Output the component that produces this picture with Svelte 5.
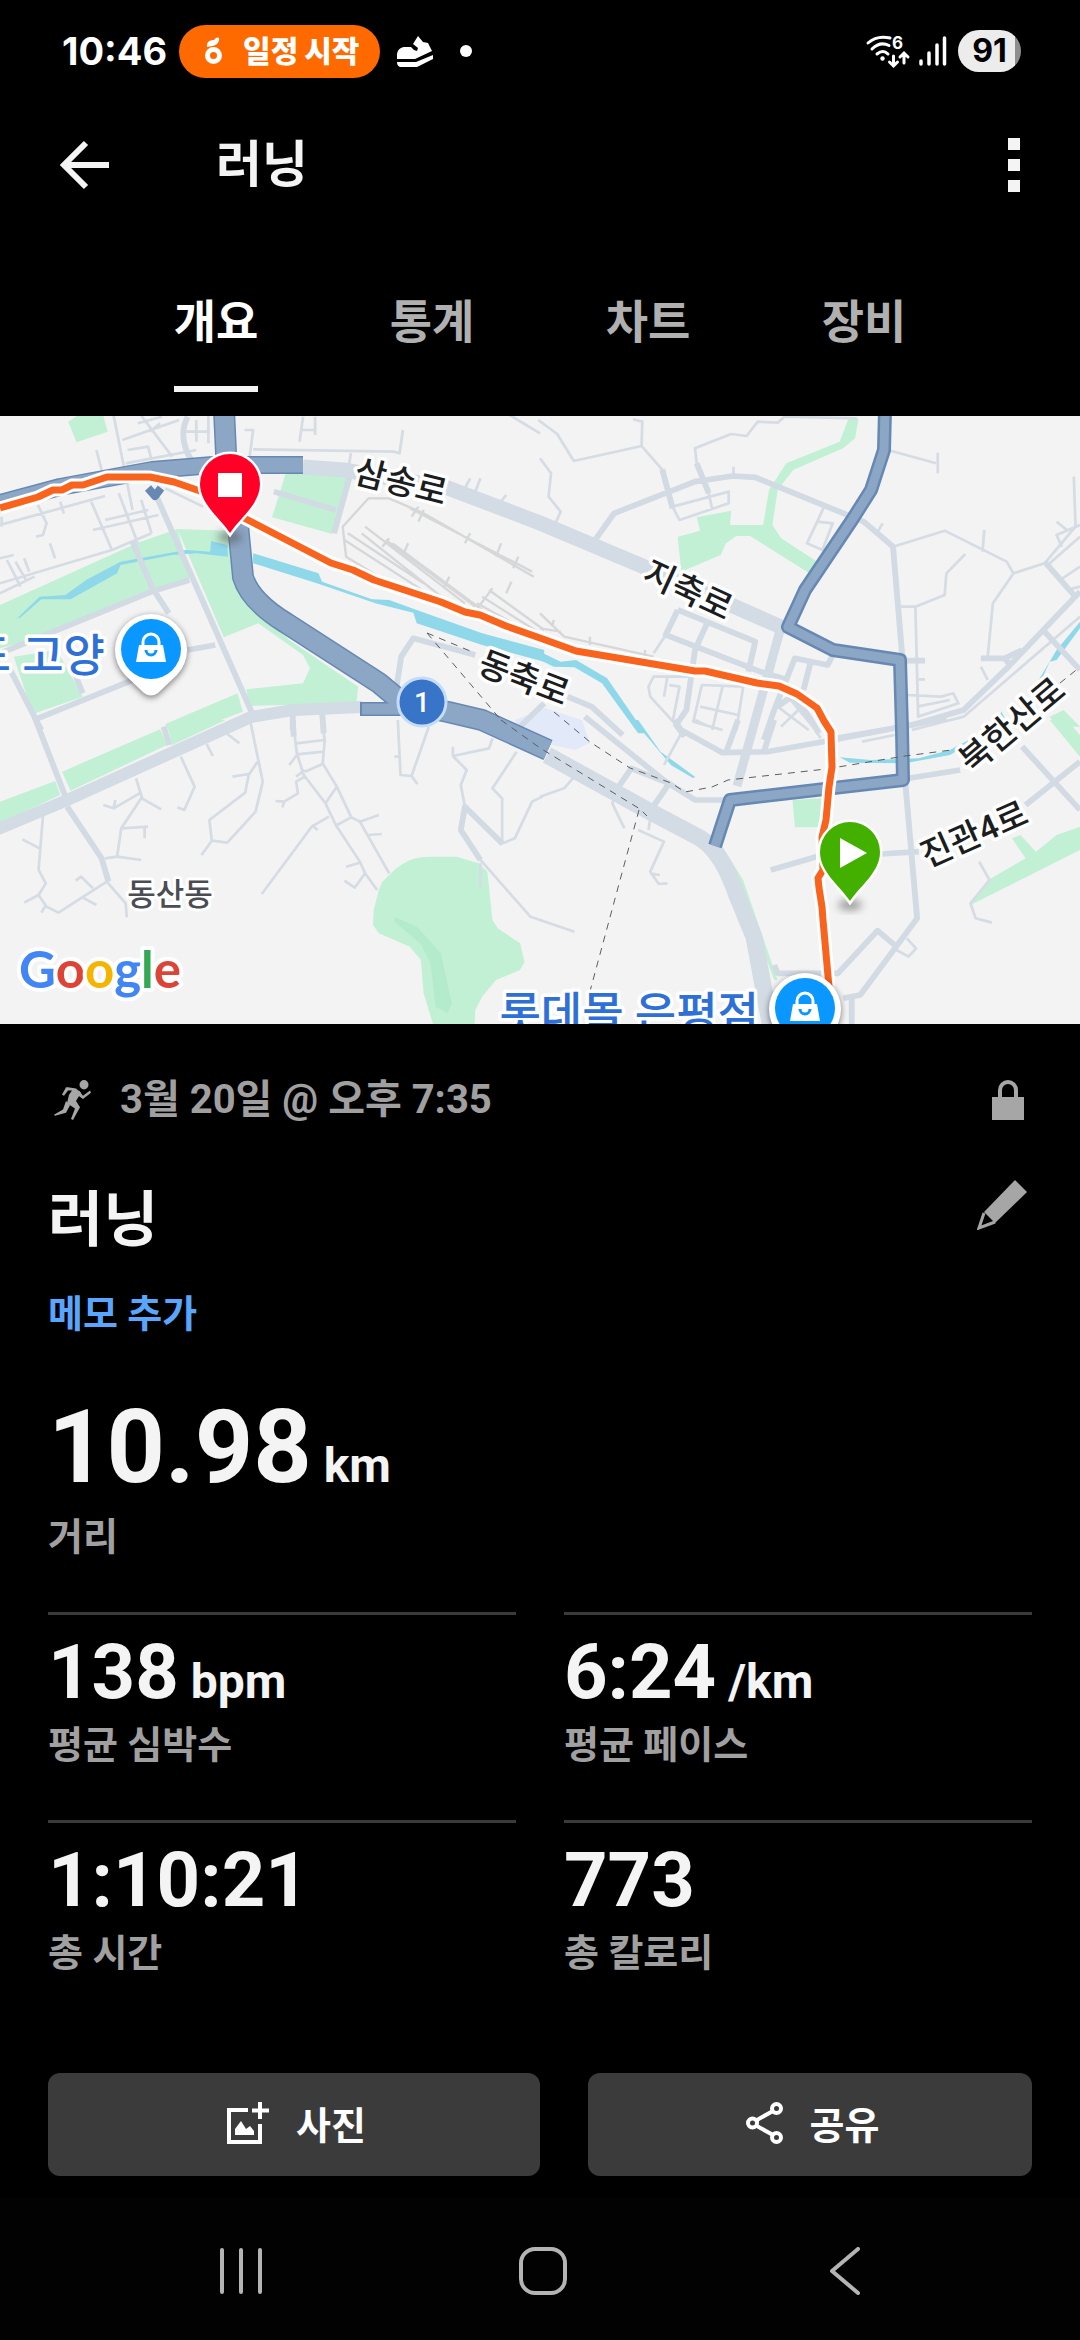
<script>
	let active = '개요';
	const tabs = ['개요', '통계', '차트', '장비'];

	const stats = [
		{ value: '138', unit: 'bpm', label: '평균 심박수' },
		{ value: '6:24', unit: '/km', label: '평균 페이스' },
		{ value: '1:10:21', unit: '', label: '총 시간' },
		{ value: '773', unit: '', label: '총 칼로리' }
	];

	// the map comes in four tiles, each with its own 1568x960 grid
	const tiles = [
		{
			x: 0, y: -6,
			parks: 'M198 35L225 17H300L313 65 222 97z M830 188L1015 200 965 372 790 322z M0 585L400 398 515 357 555 500 440 545 130 680 0 715z M515 357L665 362 690 540 840 690 1040 830 1035 880 725 888 715 838 880 820 900 775 880 735 750 640 650 682z M40 740L165 720 240 860 95 912z M480 942L690 850 705 905 500 985z',
			water: 'M50 625L115 560 190 555 250 510 350 455 540 420 610 425 613 393 660 405 662 440 570 430 500 435 350 465 340 490 270 530 205 568 120 568 60 622z M735 430L925 490 935 515 1080 568 1130 570 1210 600 1400 670 1580 720V755L1400 705 1210 640 1200 608 1090 580 920 520 735 460z',
			rail: 'M1100 500L1005 440 995 350 1070 265H1130L1230 310 1550 500 M1190 295L1545 485 M1010 370L1230 520 M1060 350L1350 580 M1050 370L1330 600 M1120 390L1380 590 M1140 400L1400 600 M1000 390L1300 590 M1420 540L1580 660 M1400 560L1568 670 M1385 580L1568 685 M1430 535L1390 590 M1195 320L1215 290 M1215 335L1230 300 M1350 400L1365 370 M1440 440L1455 400 M1490 475L1505 440 M1110 410L1130 385 M1170 435L1185 400 M1470 550L1485 515 M1290 530L1305 500',
			lanes: 'M330 17L385 300 M355 90L520 30 M410 17L500 140 M400 40L470 20 M435 65L465 40 M365 160L570 120 M570 30V95 M605 17V100 M540 65H610 M370 120L430 110 440 150 M280 120L295 180 M0 345L305 258 M5 350V320 M110 285L135 340 125 375 105 380 M175 275L185 310 M265 275L325 420 M345 250L400 400 M410 270L440 370 M325 420L0 520 M440 370L325 420 M270 360L460 315 M305 330L430 300 M145 400L160 445 M0 445L40 435 M20 450L60 530 M45 455L75 510 M70 445L85 485 M0 550L100 500 M735 118L1145 125 1160 130 1170 60 M710 60H735L725 140 M870 95L880 20 M915 75V20 M875 60H915 M1020 120L1010 190 M480 235L590 290 M1350 235L1365 205 M1380 245L1395 205 M1450 280L1470 255 M1480 15L1568 70',
			streets: 'M545 20Q515 80 555 150 M455 260L730 905 M385 395L440 530 490 610 M440 545L550 510 M0 730L440 545 M30 780L120 960 M110 925L410 800 M545 720L625 705 M205 760L240 850 M850 905V960 M935 905L940 970 M1150 840L1165 740 1200 685 1380 735 M1580 880L1510 950 M970 370L1015 200 M795 245L975 300'
		},
		{
			x: 540, y: -6,
			parks: 'M455 322L555 302 552 345H648L665 240 715 160 870 95 895 28 925 25 915 85 880 115 735 180 690 240 675 345 700 385 805 455 780 488 610 378H570L540 400 525 435 410 485 400 380 465 362z M165 396L320 455 310 465z M570 575L695 635 680 640z M1480 920L1520 900 1568 950H1500z',
			water: 'M0 725L60 755 105 750 195 805 305 970H285L180 820 100 772 40 770 0 750z M1568 635L1500 720 1448 810 1455 812 1480 755 1500 750 1568 655z M1340 905L1350 925H1330z M1380 880L1375 895H1365z',
			rail: 'M0 610L70 680 330 740 M0 655L60 665 M40 630L35 650 M145 680V705 M305 720V740',
			lanes: 'M-5 30L50 72 98 153 295 108 360 185 M295 108L297 35 270 28 M455 160L450 115 555 72 600 78 632 35 690 38 710 20 920 25 M0 145L32 190 25 260 60 305 45 340 M1010 120L1150 160 M1155 128V190 M562 170V198 M385 290L548 245V280L405 330 385 290 M490 250L500 298 M825 290L805 335 850 340 820 420 775 400 805 335 M1025 410L1175 362 1355 455 1375 490 1465 460 1555 350 1550 200 M1285 425L1290 360 M975 375L995 340 M1375 490L1315 580 1300 740 M1045 590H1090L1175 555 1180 490 1235 432 M1090 590L1098 920 1215 880 1200 850 1165 860 1065 855 M1095 890L1190 870 M1100 808H1118 M1280 770L1300 810 M365 675L330 730 M440 800L330 800 315 830 320 860 400 950 M370 800L360 860 M375 825L405 830 385 935 M590 830L470 825 445 935 530 960 M530 830L500 960 M590 830L570 960 M465 890L575 915 M690 890L780 960 M720 860L800 960 M765 885L700 950 M1500 335L1530 360 M1515 410L1500 375 1568 345 M1480 460L1568 380 M1510 510L1568 470 M1568 620L1230 920 1080 960 M1530 540L1568 530',
			streets: 'M160 390L215 310 450 215 560 198 625 202 940 335 1025 410 1052 740 M355 178L385 295 M455 160L490 250 M1568 545L1360 770 1230 900 1080 945 860 985 M400 600L365 675 640 785 720 810 M400 600L625 695 605 785 M485 640L450 720 425 900 395 945 420 980 M850 735L835 765 740 745 680 900 650 990 M785 760L765 840 M690 890L730 860Q760 880 810 970 M1465 455L1550 555 M1465 665L1568 780 M1280 745L1350 745 1400 720 M1345 740L1365 765 M1065 752H1118 M80 860L150 890 240 975'
		},
		{
			x: 0, y: 304,
			parks: 'M0 245L160 183 175 225 0 310z M180 155L465 28 485 75 205 212z M485 15L520 0H655L500 75z M1130 465C1170 420 1210 410 1250 410H1325L1390 430 1415 455 1430 600 1445 625 1510 670 1523 725 1510 750 1440 780 1400 830 1380 870 1378 915H1258L1230 820 1222 720 1190 680 1100 640 1083 615 1085 570 1100 510 1110 485z',
			hills: 'M1145 590L1210 620 1280 700 1312 850 1300 880 1265 860 1250 730 1220 670 1145 605z',
			lanes: 'M125 285L112 450 133 490 112 525 135 560 170 578 310 485 365 550 368 592 M65 358L115 385 M70 548L112 525 M120 578L132 558 M220 482L235 470 270 505 M235 530L280 555 M305 415L340 410 410 420 M340 410L352 325 412 232 395 175 M352 325L430 320 M420 355V320 M300 255L330 265 405 220 M330 265L335 240 M412 235L468 268 M525 110L565 200 535 270 515 262 M600 72L618 108 M660 42L695 70 M728 10L763 185 742 275 660 368 615 362 608 300 712 218 722 165 748 125 M675 170L722 162 M615 362L585 405 M850 0L862 100 882 165 945 250 975 315 1045 425 1060 460 1095 510 M935 0L943 60 937 130 978 200 1020 292 1045 305 1130 460 M860 70L943 60 M862 103L940 95 M885 155L937 132 M945 250L978 200 M978 315L1020 292 M1045 305L1100 285 M1070 345L1108 342 M862 105L840 135 M885 150L860 170 M885 170L860 185 865 220 825 245 800 243 M820 262L825 245 M955 290L905 320 760 522 M905 315L922 330 M1005 440L1045 428 M1060 460L1030 503 1000 482 M1155 0L1163 165 1195 168 1245 20 M1195 168L1212 192 M1145 110H1160 M1315 80V108L1420 85 1430 55 M1315 108L1355 150 1338 195 1350 260 M1500 95L1430 205 1458 235V370 M1460 370L1495 355 1545 245 1575 230 M1395 420L1540 590 1575 602 M1395 430V500',
			streets: 'M100 -10L190 230 M475 20L492 75 M195 260L295 415 315 485 M1460 372L1350 260 1338 330 1395 420 M850 0L853 50'
		},
		{
			x: 540, y: 304,
			parks: 'M733 240L820 235 810 322H740z M545 300L562 255 530 380 590 480 690 780H680L570 480 520 400z M1250 555L1310 475 1410 415 1370 355 1395 345 1440 395 1500 345 1568 320V390z M1480 0H1530L1568 45V110z',
			water: 'M870 112L960 120 1100 115 1190 90 1245 60 1240 75 1190 105 1060 130 900 128z M270 0H285L350 95 450 170 445 175 380 135z',
			lanes: 'M1065 655L1092 685 1070 710 1035 690 M225 210L210 250 245 325 M325 265L315 330 M285 330L360 365 320 455 345 492 370 490 M320 460L348 465 M0 600L100 635 M0 230L70 205 100 170 M410 40L360 135 M1275 425L1305 480 1250 550 1265 595 1312 608 M935 65L1030 45 M780 0L815 55 M450 0L480 15',
			streets: 'M130 -10L365 185 450 240H540 M390 0L410 30 530 98 660 95 850 60 1180 -5 M650 95L680 0 M540 98L575 0 M225 205L265 145 375 190 325 265 M1060 180L1095 595 930 825 880 835 M905 835V925 M670 450L820 405 M990 402L1100 395 M680 735L690 760H865L980 632 1035 680 M1070 175L1220 150 M1400 80L1568 270 M1568 125L1410 255'
		}
	];

	const route =
		'M0 92L38 81 53 74H62L72 69H83L107 61H150L174 66 200 75 246 103 331 147 353 154 374 164 441 186 465 196 480 199 506 210 540 222 576 235 695 255H705L757 267 779 270 797 278 817 292 824 305 831 316 832 351 829 371 826 404 822 421 823 454 818 462 819 472 822 491 823 504 829 571';
	const highway1 =
		'M224 -6L226 37 238 109 243 161Q250 185 286 207L379 267 403 287 448 296 482 304 548 334';
	const highway2 = 'M0 87L60 71 152 54 213 49 303 49';
	const highway3 =
		'M885 -6L884 34 871 74 852 104 805 174 788 211 833 234 900 244 902 314 903 364 730 384 715 430';
</script>

{#snippet pin(x, y)}
	<path
		class="pin-edge"
		d="M{x} {y + 49}C{x - 10} {y + 34} {x - 30} {y + 20} {x - 30} {y}A30 30 0 0 1 {x + 30} {y}C{x + 30} {y + 20} {x + 10} {y + 34} {x} {y + 49}z"
	/>
{/snippet}

{#snippet shop(x, y)}
	<g transform="translate({x} {y})">
		<path class="shop-edge" d="M-26 26A36 36 0 1 1 26 26L7 44Q0 49 -7 44z" />
		<circle r="30" fill="#0a97ff" />
		<path d="M-12 -4H12L15 13H-15z" fill="#fff" />
		<path d="M-8 -3V-7A8 8 0 0 1 8 -7V-3" fill="none" stroke="#fff" stroke-width="3" />
		<path d="M-5 1A5 5 0 0 0 5 1" fill="none" stroke="#0a97ff" stroke-width="3" />
	</g>
{/snippet}

<div class="screen">
	<div class="status">
		<span class="clock">10:46</span>
		<span class="event">
			<svg width="17" height="28" viewBox="0 0 17 28" aria-hidden="true">
				<circle cx="8.5" cy="18.5" r="6" fill="none" stroke="#fff" stroke-width="5" />
				<path d="M2 10C1 4 6 3 9 3 11 0 13 0 14 1 15 5 11 9 7 9z" fill="#fff" />
			</svg>
			일정 시작
		</span>
		<svg class="shoe" width="37" height="31" viewBox="0 0 37 31" aria-hidden="true">
			<path d="M0 23V18C1 13 4 11 8 11H14L17 14 20 15 21 12 16 8 21 0 26 6 31 7 35 15 18 23z" fill="#fff" />
			<path d="M0 26H19L36 19V23L20 31H3Q0 30 0 26z" fill="#fff" />
		</svg>
		<span class="dot"></span>
		<svg class="wifi" width="44" height="32" viewBox="0 0 44 32" aria-hidden="true">
			<g fill="none" stroke="#fff" stroke-width="3" stroke-linecap="round">
				<path d="M2 8Q11 0 24 3" />
				<path d="M6 14Q14 6 23 10.5" />
				<path d="M11 19Q17 14 22 19" />
				<path d="M27.5 21V30M23.5 27L27.5 31 31.5 27M38 28V19M34 22L38 18 42 22" />
			</g>
			<circle cx="16.5" cy="23.5" r="2.2" fill="#fff" />
			<text x="26" y="14" class="wifi-gen">6</text>
		</svg>
		<svg class="signal" width="28" height="30" viewBox="0 0 28 30" aria-hidden="true">
			<path d="M2 25V28M10 17V28M18 9V28M25.5 2V28" stroke="#fff" stroke-width="3.5" stroke-linecap="round" />
		</svg>
		<span class="battery">91</span>
	</div>

	<header>
		<button class="icon" aria-label="뒤로">
			<svg width="50" height="50" viewBox="0 0 50 50">
				<path d="M26 3L4 25 26 47M4 25H49" fill="none" stroke="#f4f4f4" stroke-width="6" />
			</svg>
		</button>
		<h1>러닝</h1>
		<button class="icon more" aria-label="더보기">
			<svg width="12" height="54" viewBox="0 0 12 54">
				<path d="M0 0H12V12H0zM0 21H12V33H0zM0 42H12V54H0z" fill="#f4f4f4" />
			</svg>
		</button>
	</header>

	<nav class="tabs">
		{#each tabs as tab}
			<button class:active={tab === active} on:click={() => (active = tab)}>{tab}</button>
		{/each}
	</nav>

	<svg class="map" viewBox="0 0 1080 608" role="img" aria-label="러닝 경로 지도">
		<defs>
			<filter id="soft" x="-50%" y="-50%" width="200%" height="200%">
				<feGaussianBlur stdDeviation="4" />
			</filter>
		</defs>
		<rect width="1080" height="608" fill="#f3f3f3" />
		<path d="M515 304L545 292 582 304 590 327 575 334 548 328 520 318z" fill="#e2eafa" />
		{#each tiles as t}
			<g transform="translate({t.x} {t.y}) scale(.3444 .3333)">
				<path class="park" d={t.parks} />
				{#if t.hills}<path class="hill" d={t.hills} />{/if}
				{#if t.water}<path class="water" d={t.water} />{/if}
				{#if t.rail}<path class="rail" d={t.rail} />{/if}
				<path class="lane" d={t.lanes} />
				<path class="street" d={t.streets} />
			</g>
		{/each}

		<g class="avenue">
			<path d="M303 51L344 54 448 72 540 107 647 152 781 211" stroke-width="15" />
			<path d="M781 211L737 370" stroke-width="9" />
			<path d="M-4 414L65 385 160 342 251 301 293 294 362 291" stroke-width="12" />
			<path d="M547 339L647 394 700 422Q722 436 736 477L754 521 771 612" stroke-width="17" />
		</g>

		<g class="highway">
			<path d={highway1} stroke-width="22" />
			<path d={highway2} stroke-width="18" />
			<path d="M360 293H410" stroke-width="14" />
			<path d="M148 72L155 80 161 72" stroke-width="8" />
			<path d={highway3} stroke-width="14" />
		</g>
		<g class="highway-top">
			<path d={highway1} stroke-width="19" />
			<path d={highway2} stroke-width="15" />
			<path d="M362 293H410" stroke-width="11" />
			<path d={highway3} stroke-width="9" />
		</g>

		<g class="dashes">
			<path d="M427 217L501 304M427 217L475 237" />
			<path d="M501 304L540 332 640 393 647 400" />
			<path d="M554 296L590 326 630 352 671 367 685 376 712 371 728 364 826 353 905 340 967 332" />
			<path d="M639 394L586 590" />
			<path d="M1060 267L1080 251" />
		</g>

		<path class="route-edge" d={route} />
		<path class="route" d={route} />

		<g class="road-name">
			<text transform="translate(401 66) rotate(14)" y="12">삼송로</text>
			<text transform="translate(688 174) rotate(25)" y="12">지축로</text>
			<text transform="translate(524 262) rotate(21)" y="12">동축로</text>
			<text transform="translate(1012 309) rotate(-40)" y="12">북한산로</text>
			<text transform="translate(974 418) rotate(-24)" y="12">진관4로</text>
		</g>
		<text class="district" x="170" y="489">동산동</text>
		<text class="place" x="105" y="256" text-anchor="end">드 고양</text>
		<text class="place" x="759" y="614" text-anchor="end">롯데몰 은평점</text>

		<circle cx="422" cy="286" r="24" fill="#3874c8" stroke="#c4dcf8" stroke-width="3" />
		<text class="shield" x="422" y="296">1</text>

		{@render shop(151, 233)}
		{@render shop(805, 592)}

		<ellipse cx="230" cy="121" rx="12" ry="6" fill="#555" opacity=".6" filter="url(#soft)" />
		<g fill="#ff0026">{@render pin(230, 68)}</g>
		<rect x="218" y="57" width="24" height="24" fill="#fff" />
		<ellipse cx="850" cy="489" rx="12" ry="5" fill="#555" opacity=".6" filter="url(#soft)" />
		<g fill="#43b000">{@render pin(850, 436)}</g>
		<path d="M840 422L867 437 840 452z" fill="#fff" />

		<text class="google" x="19" y="572"
			><tspan fill="#4285f4">G</tspan><tspan fill="#db4437">o</tspan><tspan fill="#f4b400">o</tspan><tspan
				fill="#4285f4">g</tspan><tspan fill="#34a853">l</tspan><tspan fill="#db4437">e</tspan></text
		>
	</svg>

	<main>
		<div class="date">
			<svg class="runner" width="37" height="40" viewBox="0 0 37 38" preserveAspectRatio="none" aria-hidden="true">
				<circle cx="30" cy="4.5" r="4.5" />
				<path d="M14 7L22 8 27 12 22 20 26 26 19 38 17 37 21 27 13 22 15 14 18 10H14L10 15 8 14 12 7z" />
				<path d="M25 10L29 15 36 10 37 12 29 18 23 14zM12 20L16 24 12 31 1 34 0 33 9 28z" />
			</svg>
			<span>3월 20일 @ 오후 7:35</span>
			<svg class="lock" width="32" height="40" viewBox="0 0 32 40" aria-label="비공개">
				<path d="M0 17H32V40H0z" />
				<path d="M8 18V10A8 8 0 0 1 24 10V18" fill="none" stroke="#a6a6a6" stroke-width="4" />
			</svg>
		</div>

		<div class="title">
			<h2>러닝</h2>
			<button class="icon" aria-label="수정">
				<svg width="50" height="50" viewBox="0 0 50 50">
					<path d="M38 0L50 12 18 43 7 32z" fill="#a6a6a6" />
					<path d="M7 33L2 48 18 42" fill="none" stroke="#a6a6a6" stroke-width="3" />
				</svg>
			</button>
		</div>
		<a class="memo" href="#memo">메모 추가</a>

		<div class="distance">10.98<small>km</small></div>
		<div class="label">거리</div>

		<div class="stats">
			{#each stats as s}
				<div class="stat">
					<div class="value">{s.value}{#if s.unit}<small>{s.unit}</small>{/if}</div>
					<div class="label">{s.label}</div>
				</div>
			{/each}
		</div>

		<div class="actions">
			<button>
				<svg width="42" height="42" viewBox="0 0 42 42" aria-hidden="true">
					<path d="M21 8H2V40H33V22" fill="none" stroke="#fff" stroke-width="4" />
					<path d="M33 0V17M25 8.5H42" stroke="#fff" stroke-width="4" />
					<path d="M8 33V27L14 19 19 27 23 24 27 29V33z" fill="#fff" />
				</svg>
				사진
			</button>
			<button>
				<svg width="37" height="42" viewBox="0 0 37 42" aria-hidden="true">
					<g fill="none" stroke="#fff" stroke-width="4">
						<circle cx="30.5" cy="6.5" r="4.5" />
						<circle cx="6.5" cy="21" r="4.5" />
						<circle cx="30.5" cy="35.5" r="4.5" />
						<path d="M10 18.5L27 9M10 23.5L27 33" />
					</g>
				</svg>
				공유
			</button>
		</div>
	</main>

	<footer>
		<button aria-label="최근 앱">
			<svg width="48" height="48" viewBox="0 0 48 48">
				<path d="M5 3V45M24 3V45M43 3V45" />
			</svg>
		</button>
		<button aria-label="홈">
			<svg width="48" height="48" viewBox="0 0 48 48">
				<rect x="2" y="2" width="44" height="44" rx="14" />
			</svg>
		</button>
		<button aria-label="이전">
			<svg width="48" height="48" viewBox="0 0 48 48">
				<path d="M37 2L11 24 37 46" />
			</svg>
		</button>
	</footer>
</div>

<style>
	:global(body) {
		background: #000;
	}
	.screen {
		display: flex;
		flex-direction: column;
		min-height: 100vh;
		background: #000;
		color: #f4f4f4;
		font-family: Roboto, 'Noto Sans CJK KR', sans-serif;
		font-weight: 700;
	}
	button {
		padding: 0;
		border: 0;
		background: none;
		color: inherit;
		font: inherit;
		cursor: pointer;
	}
	svg {
		display: block;
		flex: none;
	}
	h1, h2 {
		margin: 0;
	}

	.status {
		display: flex;
		align-items: center;
		height: 102px;
		padding: 0 59px 0 62px;
		color: #fff;
		font-family: Inter, 'Noto Sans CJK KR', sans-serif;
	}
	.clock {
		font-size: 38px;
	}
	.event {
		display: flex;
		align-items: center;
		gap: 21px;
		height: 53px;
		margin-left: 12px;
		padding: 0 21px 0 26px;
		border-radius: 27px;
		background: #ff6a00;
		font-size: 30px;
		font-weight: 900;
		line-height: 53px;
	}
	.shoe {
		margin-left: 17px;
	}
	.dot {
		width: 12px;
		height: 12px;
		margin-left: 26px;
		border-radius: 50%;
		background: #fff;
	}
	.wifi {
		margin-left: auto;
		overflow: visible;
	}
	.wifi-gen {
		fill: #fff;
		font-size: 17px;
	}
	.signal {
		margin: 0 11px 0 9px;
	}
	.battery {
		width: 63px;
		height: 42px;
		border-radius: 21px;
		background: linear-gradient(90deg, #ececec 91%, #8e8e8e 91%);
		color: #000;
		font-size: 32px;
		line-height: 42px;
		text-align: center;
	}

	header {
		display: flex;
		align-items: center;
		height: 126px;
		padding: 0 60px;
	}
	h1 {
		margin-left: 106px;
		font-size: 50px;
		line-height: 60px;
	}
	.more {
		margin-left: auto;
	}

	.tabs {
		display: grid;
		grid-template-columns: repeat(4, 1fr);
		justify-items: center;
		padding: 0 10% 24px;
	}
	.tabs button {
		height: 164px;
		padding-top: 22px;
		border-bottom: 6px solid transparent;
		color: #b0b0b0;
		font-size: 46px;
	}
	.tabs .active {
		border-color: #f4f4f4;
		color: #fff;
	}

	.map {
		width: 100%;
		height: auto;
	}
	.park {
		fill: #c2f0d5;
	}
	.hill {
		fill: #b5ebcd;
	}
	.water {
		fill: #8ed8ea;
	}
	.rail, .lane, .street, .avenue, .highway, .highway-top, .dashes, .route, .route-edge {
		fill: none;
		stroke-linejoin: round;
	}
	.rail {
		stroke: #d6d7d9;
		stroke-width: 7;
	}
	.lane {
		stroke: #d5dce4;
		stroke-width: 8;
	}
	.street {
		stroke: #d2dae3;
		stroke-width: 17;
	}
	.avenue {
		stroke: #d3dbe4;
	}
	.highway {
		stroke: #6788b2;
	}
	.highway-top {
		stroke: #8ca6c6;
	}
	.dashes {
		stroke: #5b5e62;
		stroke-dasharray: 7 6;
	}
	.route-edge {
		stroke: #fff;
		stroke-width: 13;
	}
	.route {
		stroke: #f8641e;
		stroke-width: 7;
	}
	.road-name, .district, .place, .google {
		stroke: #fff;
		stroke-linejoin: round;
		paint-order: stroke;
	}
	.road-name {
		fill: #1c1d1f;
		stroke-width: 7px;
		font-size: 34px;
		font-weight: 500;
		text-anchor: middle;
	}
	.district {
		fill: #4a4e54;
		stroke-width: 6px;
		font-size: 31px;
		font-weight: 500;
		text-anchor: middle;
	}
	.place {
		fill: #2f70d6;
		stroke-width: 7px;
		font-size: 45px;
		font-weight: 500;
	}
	.shield {
		fill: #fff;
		font-size: 28px;
		font-weight: 500;
		text-anchor: middle;
	}
	.google {
		stroke-width: 8px;
		font-family: Lato, sans-serif;
		font-size: 51px;
		font-weight: 700;
	}
	.pin-edge {
		stroke: #fff;
		stroke-width: 5;
		paint-order: stroke;
	}
	.shop-edge {
		fill: #fff;
		filter: drop-shadow(0 2px 3px rgba(0, 0, 0, 0.5));
	}

	main {
		padding: 52px 48px 21px;
	}
	.date {
		display: flex;
		align-items: center;
		height: 48px;
		padding: 0 8px 0 6px;
		color: #a0a0a0;
		font-size: 40px;
		line-height: 48px;
	}
	.date span {
		margin-left: 29px;
	}
	.runner, .lock {
		fill: #a6a6a6;
	}
	.lock {
		margin-left: auto;
	}
	.title {
		display: flex;
		align-items: flex-start;
		justify-content: space-between;
		margin-top: 56px;
		padding-right: 5px;
	}
	h2 {
		padding-top: 5px;
		font-size: 60px;
		line-height: 72px;
	}
	.memo {
		display: block;
		margin-top: 33px;
		color: #59a6ff;
		font-size: 38px;
		line-height: 48px;
		text-decoration: none;
	}
	small {
		font-size: 48px;
		line-height: 48px;
	}
	.distance, .value {
		display: flex;
		align-items: baseline;
		gap: 12px;
	}
	.distance {
		margin: 53px 0 10px;
		font-size: 102px;
		line-height: 112px;
	}
	.label {
		color: #a0a0a0;
		font-size: 38px;
		line-height: 48px;
	}
	.stats {
		display: grid;
		grid-template-columns: 1fr 1fr;
		gap: 51px 48px;
		margin-top: 51px;
	}
	.stat {
		padding-top: 17px;
		border-top: 3px solid #3a3a3a;
	}
	.value {
		margin-bottom: 9px;
		font-size: 76px;
		line-height: 80px;
	}
	.actions {
		display: grid;
		grid-template-columns: 41fr 37fr;
		gap: 48px;
		margin-top: 96px;
	}
	.actions button {
		display: flex;
		align-items: center;
		justify-content: center;
		gap: 27px;
		height: 103px;
		padding: 0 0 4px 5px;
		border-radius: 12px;
		background: #3b3b3b;
		color: #fff;
		font-size: 38px;
	}

	footer {
		display: grid;
		grid-template-columns: repeat(3, 1fr);
		place-items: center;
		height: 143px;
		margin-top: auto;
		padding: 0 84px 0 90px;
		background: #020202;
	}
	footer svg {
		margin-bottom: -4px;
		fill: none;
		stroke: #b4b4b4;
		stroke-width: 4;
		stroke-linecap: round;
		stroke-linejoin: round;
	}
</style>
